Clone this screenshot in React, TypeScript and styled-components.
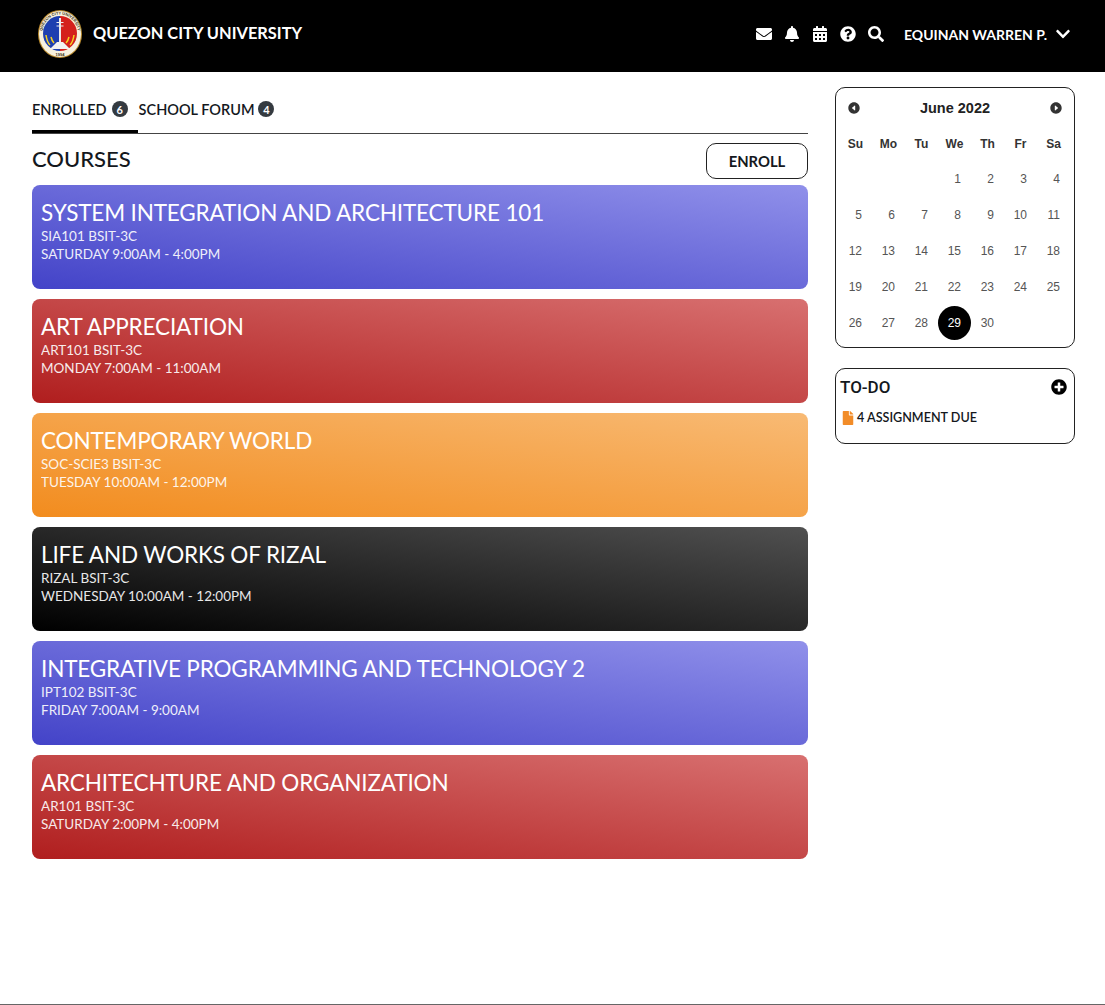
import React from "react"
import styled, { createGlobalStyle } from "styled-components"
import { FaEnvelope, FaBell, FaCalendarAlt, FaQuestionCircle, FaSearch, FaChevronDown, FaFile, FaPlusCircle } from "react-icons/fa"
import { IoCaretBackCircle, IoCaretForwardCircle } from "react-icons/io5"

const GlobalStyle = createGlobalStyle`
    html, body {
        margin: 0;
        padding: 0;
        background: #fff;
    }
    body {
        font-family: "Lato", "Noto Sans", sans-serif;
        color: #14181d;
    }
`

const Page = styled.div`
    height: 1005px;
    box-sizing: border-box;
    border-bottom: 1px solid #666;
    display: flex;
    flex-direction: column;
`

const TopBar = styled.header`
    height: 72px;
    flex: none;
    background: #000;
    color: #fff;
    display: flex;
    align-items: center;
    padding: 0 34px 4px 38px;
    box-sizing: border-box;
`

const Brand = styled.div`
    display: flex;
    align-items: center;
    gap: 11px;
    font-size: 16.4px;
    font-weight: 700;
    margin-right: auto;
`

const BrandName = styled.span`
    margin-top: -3px;
`

const TopIcons = styled.nav`
    display: flex;
    align-items: center;
    gap: 12px;
    font-size: 16px;
    margin-right: 20px;
`

const UserMenu = styled.div`
    display: flex;
    align-items: center;
    gap: 8px;
    font-size: 14px;
    font-weight: 700;
    svg {
        font-size: 16px;
    }
`

const Body = styled.main`
    display: flex;
    align-items: flex-start;
    padding: 15px 30px 0 32px;
    gap: 27px;
`

const Left = styled.section`
    width: 776px;
    flex: none;
`

const Right = styled.aside`
    width: 240px;
    flex: none;
    display: flex;
    flex-direction: column;
    gap: 20px;
`

const Tabs = styled.div`
    display: flex;
    height: 46px;
    border-bottom: 1px solid #444;
`

const Tab = styled.div<{ $active?: boolean }>`
    display: flex;
    align-items: center;
    gap: ${(p) => (p.$active ? "5px" : "4px")};
    height: 46px;
    padding: ${(p) => (p.$active ? "1px 10px 0 0" : "0 0 2px 1px")};
    box-sizing: border-box;
    font-size: 14.5px;
    font-weight: 600;
    border-bottom: ${(p) => (p.$active ? "3px solid #000" : "none")};
`

const Badge = styled.span`
    width: 16px;
    height: 16px;
    border-radius: 50%;
    background: #343a40;
    color: #fff;
    font-size: 11px;
    font-weight: 700;
    display: flex;
    align-items: center;
    justify-content: center;
`

const CoursesHead = styled.div`
    display: flex;
    justify-content: space-between;
    align-items: flex-start;
    height: 51px;
    padding-top: 9px;
    box-sizing: border-box;
`

const Heading = styled.h2`
    margin: 2px 0 0;
    font-size: 22px;
    line-height: 28px;
    font-weight: 500;
`

const EnrollButton = styled.button`
    width: 102px;
    height: 36px;
    background: #fff;
    border: 1px solid #222;
    border-radius: 10px;
    font-family: inherit;
    font-size: 14.8px;
    font-weight: 700;
    color: #14181d;
`

const CourseList = styled.div`
    display: flex;
    flex-direction: column;
    gap: 10px;
`

const CourseCard = styled.article<{ $from: string; $to: string }>`
    height: 104px;
    box-sizing: border-box;
    border-radius: 8px;
    padding: 13px 9px 0;
    color: #fff;
    background: linear-gradient(to top right, ${(p) => p.$from}, ${(p) => p.$to});
`

const CourseTitle = styled.h3`
    margin: 0;
    font-size: 22.5px;
    line-height: 29px;
    font-weight: 400;
    letter-spacing: -0.15px;
`

const CourseLine = styled.div`
    font-size: 13.5px;
    line-height: 18px;
    opacity: 0.9;
`

const Panel = styled.div`
    border: 1px solid #222;
    border-radius: 10px;
    background: #fff;
    box-sizing: border-box;
`

const CalendarPanel = styled(Panel)`
    height: 261px;
    padding: 11px 11px 0;
    font-family: "Liberation Sans", Arial, sans-serif;
`

const CalendarHead = styled.div`
    display: flex;
    justify-content: space-between;
    align-items: center;
    height: 18px;
    font-size: 14.5px;
    font-weight: 700;
    color: #222;
    svg {
        font-size: 14px;
        color: #333;
    }
`

const DayGrid = styled.div`
    display: grid;
    grid-template-columns: repeat(7, 33px);
    margin: 18px 0 0 -8px;
    width: 231px;
`

const DayName = styled.div`
    height: 26px;
    line-height: 18px;
    text-align: center;
    font-size: 12px;
    font-weight: 700;
    color: #333;
`

const Day = styled.div<{ $today?: boolean }>`
    height: 36px;
    display: flex;
    align-items: center;
    justify-content: center;
    font-size: 12px;
    color: ${(p) => (p.$today ? "#fff" : "#555")};
    span {
        width: 33px;
        height: 34px;
        box-sizing: border-box;
        padding-right: 10px;
        border-radius: 50%;
        display: flex;
        align-items: center;
        justify-content: flex-end;
        background: ${(p) => (p.$today ? "#000" : "transparent")};
    }
`

const TodoPanel = styled(Panel)`
    height: 76px;
    padding: 7px 7px 0 4px;
`

const TodoHead = styled.div`
    display: flex;
    justify-content: space-between;
    align-items: center;
    font-family: "Roboto", sans-serif;
    font-size: 17px;
    line-height: 22px;
    font-weight: 500;
    svg {
        font-size: 16px;
        color: #000;
    }
`

const TodoItem = styled.div`
    display: flex;
    align-items: center;
    gap: 2px;
    margin: 12px 0 0 1px;
    font-size: 12.6px;
    font-weight: 600;
    svg {
        color: #f28c28;
        font-size: 14px;
    }
`

const Logo = () => (
    <svg width="44" height="48" viewBox="0 0 44 48">
        <defs>
            <path id="sealTop" d="M4 24 A18 19.500 0 0 1 40 24" />
        </defs>
        <ellipse cx="22" cy="24" rx="22" ry="24" fill="#b98a2e" />
        <ellipse cx="22" cy="24" rx="21" ry="23" fill="#f7f1de" />
        <text fontSize="4" fontFamily="Liberation Sans" fontWeight="700" fill="#3a3320">
            <textPath href="#sealTop" startOffset="50%" textAnchor="middle">QUEZON CITY UNIVERSITY</textPath>
        </text>
        <text x="22" y="45.500" fontSize="4" fontFamily="Liberation Sans" fontWeight="700" fill="#3a3320" textAnchor="middle">1994</text>
        <path d="M22 6 A17 17.500 0 0 0 22 41 Z" fill="#1d3fb0" />
        <path d="M22 6 A17 17.500 0 0 1 22 41 Z" fill="#d4201c" />
        <path d="M21 8h2v24h-2zM18.500 12h7v1h-7zM18.500 15.500h7v1h-7z" fill="#ececec" />
        <path d="M12 39l7-7h6l7 7z" fill="#f2f2f2" />
        <path d="M8 25q1 7 4 10M13 27q1 4 3 6M36 25q-1 7-4 10M31 27q-1 4-3 6" fill="none" stroke="#f6d11f" strokeWidth="1.500" />
    </svg>
)

const courses = [
    { title: "SYSTEM INTEGRATION AND ARCHITECTURE 101", code: "SIA101 BSIT-3C", time: "SATURDAY 9:00AM - 4:00PM", from: "#4343c8", to: "#9090ea" },
    { title: "ART APPRECIATION", code: "ART101 BSIT-3C", time: "MONDAY 7:00AM - 11:00AM", from: "#b01e1e", to: "#d87070" },
    { title: "CONTEMPORARY WORLD", code: "SOC-SCIE3 BSIT-3C", time: "TUESDAY 10:00AM - 12:00PM", from: "#f28c1e", to: "#f8ba74" },
    { title: "LIFE AND WORKS OF RIZAL", code: "RIZAL BSIT-3C", time: "WEDNESDAY 10:00AM - 12:00PM", from: "#000000", to: "#505050" },
    { title: "INTEGRATIVE PROGRAMMING AND TECHNOLOGY 2", code: "IPT102 BSIT-3C", time: "FRIDAY 7:00AM - 9:00AM", from: "#4343c8", to: "#9090ea" },
    { title: "ARCHITECHTURE AND ORGANIZATION", code: "AR101 BSIT-3C", time: "SATURDAY 2:00PM - 4:00PM", from: "#b01e1e", to: "#d87070" },
]

const dayNames = ["Su", "Mo", "Tu", "We", "Th", "Fr", "Sa"]
// june 2022 starts on a wednesday
const days = [0, 0, 0, ...Array.from({ length: 30 }, (_, i) => i + 1)]

export default function App() {
    return (
        <Page>
            <GlobalStyle />
            <TopBar>
                <Brand>
                    <Logo />
                    <BrandName>QUEZON CITY UNIVERSITY</BrandName>
                </Brand>
                <TopIcons>
                    <FaEnvelope />
                    <FaBell />
                    <FaCalendarAlt />
                    <FaQuestionCircle />
                    <FaSearch />
                </TopIcons>
                <UserMenu>
                    EQUINAN WARREN P.
                    <FaChevronDown />
                </UserMenu>
            </TopBar>
            <Body>
                <Left>
                    <Tabs>
                        <Tab $active>
                            ENROLLED <Badge>6</Badge>
                        </Tab>
                        <Tab>
                            SCHOOL FORUM <Badge>4</Badge>
                        </Tab>
                    </Tabs>
                    <CoursesHead>
                        <Heading>COURSES</Heading>
                        <EnrollButton>ENROLL</EnrollButton>
                    </CoursesHead>
                    <CourseList>
                        {courses.map((c) => (
                            <CourseCard key={c.title} $from={c.from} $to={c.to}>
                                <CourseTitle>{c.title}</CourseTitle>
                                <CourseLine>{c.code}</CourseLine>
                                <CourseLine>{c.time}</CourseLine>
                            </CourseCard>
                        ))}
                    </CourseList>
                </Left>
                <Right>
                    <CalendarPanel>
                        <CalendarHead>
                            <IoCaretBackCircle />
                            June 2022
                            <IoCaretForwardCircle />
                        </CalendarHead>
                        <DayGrid>
                            {dayNames.map((d) => (
                                <DayName key={d}>{d}</DayName>
                            ))}
                            {days.map((d, i) => (
                                <Day key={i} $today={d === 29}>
                                    <span>{d > 0 ? d : ""}</span>
                                </Day>
                            ))}
                        </DayGrid>
                    </CalendarPanel>
                    <TodoPanel>
                        <TodoHead>
                            TO-DO
                            <FaPlusCircle />
                        </TodoHead>
                        <TodoItem>
                            <FaFile />
                            4 ASSIGNMENT DUE
                        </TodoItem>
                    </TodoPanel>
                </Right>
            </Body>
        </Page>
    )
}
